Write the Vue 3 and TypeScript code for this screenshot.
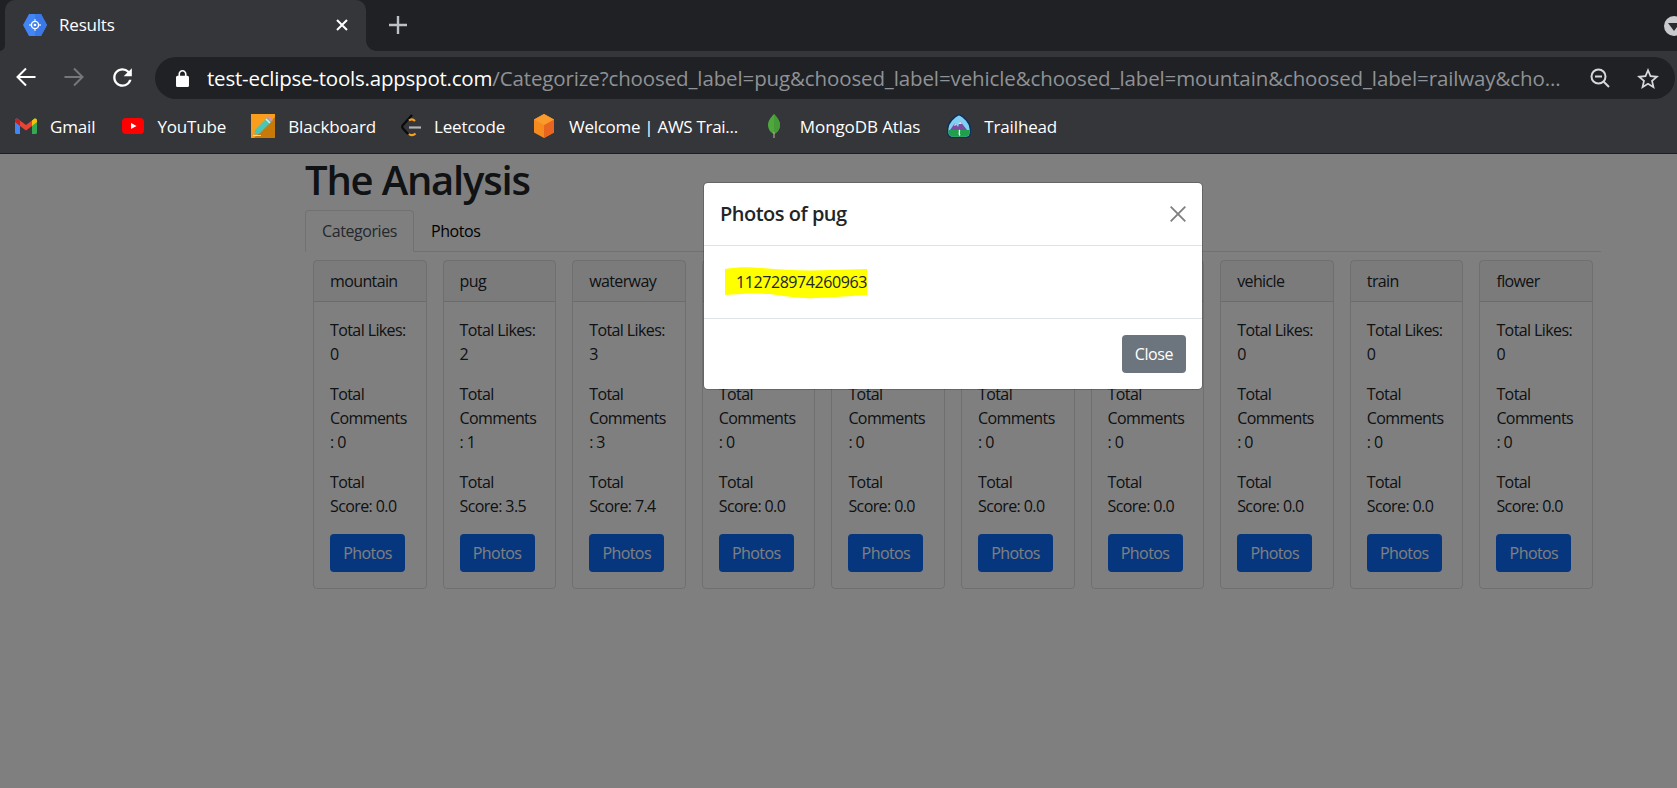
<template>
  <div class="window">
    <div class="tab-strip">
      <div class="tab">
        <svg class="favicon" viewBox="0 0 24 22" width="24" height="22">
          <polygon points="0,11 6,0 18,0 24,11 18,22 6,22" fill="#4285f4" />
          <polygon points="12,0 18,0 24,11 18,22 12,22" fill="#3b78e7" />
          <circle cx="12" cy="11" r="3.6" fill="none" stroke="#fff" stroke-width="1.4" />
          <circle cx="12" cy="11" r="1.3" fill="#fff" />
          <path d="M12 5v2M12 15v2M6 11h2M16 11h2" stroke="#cfe0fc" stroke-width="1.4" />
        </svg>
        <span class="tab-title">Results</span>
        <svg class="tab-close" viewBox="0 0 14 14" width="14" height="14">
          <path d="M2 2l10 10M12 2L2 12" stroke="#fff" stroke-width="2" />
        </svg>
      </div>
      <svg class="new-tab" viewBox="0 0 18 18" width="18" height="18">
        <path d="M9 0v18M0 9h18" stroke="#bdc1c6" stroke-width="2.4" />
      </svg>
      <div class="profile-dot"></div>
    </div>

    <div class="toolbar">
      <button class="nav-btn" type="button">
        <svg viewBox="0 0 20 20" width="20" height="20">
          <path d="M19.5 10H1.5M10 1.5L1.5 10l8.5 8.5" fill="none" stroke="#fff" stroke-width="2" />
        </svg>
      </button>
      <button class="nav-btn" type="button">
        <svg viewBox="0 0 20 20" width="20" height="20">
          <path d="M.5 10h18M10 1.5l8.5 8.5-8.5 8.5" fill="none" stroke="#74777b" stroke-width="2" />
        </svg>
      </button>
      <button class="nav-btn" type="button">
        <svg viewBox="3 3 18 18" width="21" height="21">
          <path
            fill="#fff"
            d="M17.65 6.35A7.958 7.958 0 0 0 12 4c-4.42 0-7.99 3.58-7.99 8s3.57 8 7.99 8c3.73 0 6.84-2.55 7.73-6h-2.08A5.99 5.99 0 0 1 12 18c-3.31 0-6-2.69-6-6s2.69-6 6-6c1.66 0 3.14.69 4.22 1.78L13 11h7V4l-2.35 2.35z"
          />
        </svg>
      </button>
      <div class="omnibox">
        <svg class="lock" viewBox="4 1 16 21" width="13" height="17">
          <path
            fill="#fff"
            d="M18 8h-1V6c0-2.76-2.24-5-5-5S7 3.24 7 6v2H6c-1.1 0-2 .9-2 2v10c0 1.1.9 2 2 2h12c1.1 0 2-.9 2-2V10c0-1.1-.9-2-2-2zM9 6c0-1.66 1.34-3 3-3s3 1.34 3 3v2H9V6z"
          />
        </svg>
        <span class="url"><span class="url-host">test-eclipse-tools.appspot.com</span>/Categorize?choosed_label=pug&amp;choosed_label=vehicle&amp;choosed_label=mountain&amp;choosed_label=railway&amp;cho...</span>
        <svg class="zoom-icon" viewBox="0 0 20 20" width="20" height="20">
          <circle cx="8.5" cy="8.5" r="7" fill="none" stroke="#d5d7da" stroke-width="2" />
          <path d="M5 8.5h7M13.5 13.5l5.5 5.5" stroke="#d5d7da" stroke-width="2" />
        </svg>
        <svg class="star-icon" viewBox="2 2 20 19" width="22" height="21">
          <path
            fill="#d5d7da"
            d="M22 9.24l-7.19-.62L12 2 9.19 8.63 2 9.24l5.46 4.73L5.82 21 12 17.27 18.18 21l-1.63-7.03L22 9.24zM12 15.4l-3.76 2.27 1-4.28-3.32-2.88 4.38-.38L12 6.1l1.71 4.04 4.38.38-3.32 2.88 1 4.28L12 15.4z"
          />
        </svg>
      </div>
    </div>

    <div class="bookmarks">
      <div class="bookmark gmail">
        <svg viewBox="0 0 22 16" width="22" height="16">
          <path d="M0 2.5C0 .8 1.8 0 3 1l2 1.600V16H1.500C.7 16 0 15.300 0 14.500z" fill="#4285f4" />
          <path d="M22 2.500C22 .8 20.200 0 19 1l-2 1.600V16h3.500c.8 0 1.500-.7 1.500-1.500z" fill="#34a853" />
          <path d="M5 2.600L11 7l6-4.400V8l-6 4.500L5 8z" fill="#ea4335" />
          <path d="M17 2.600L19 1c1.200-1 3-.2 3 1.500V4l-5 4z" fill="#fbbc04" />
          <path d="M0 2.500C0 .8 1.800 0 3 1l2 1.600V8L0 4z" fill="#c5221f" />
        </svg>
        <span>Gmail</span>
      </div>
      <div class="bookmark youtube">
        <svg viewBox="0 0 22 16" width="22" height="16">
          <rect width="22" height="16" rx="4" fill="#f00" />
          <path d="M9 5l5.500 3L9 11z" fill="#fff" />
        </svg>
        <span>YouTube</span>
      </div>
      <div class="bookmark blackboard">
        <svg viewBox="0 0 24 24" width="24" height="24">
          <rect width="24" height="24" fill="#f99d1c" />
          <path d="M24 3v21H3z" fill="#c77a0a" />
          <path d="M16.500 3.500l4 4L8 20l-4.500.5L4 16z" fill="#46c7b8" />
          <path d="M15 5l4 4" stroke="#e8e8e8" stroke-width="1.600" />
          <path d="M16.500 3.500l1.500-1.500 4 4-1.500 1.500z" fill="#d88bc4" />
          <path d="M2 21.500h8" stroke="#f7d9a0" stroke-width="1" />
        </svg>
        <span>Blackboard</span>
      </div>
      <div class="bookmark leetcode">
        <svg viewBox="0 0 20 24" width="20" height="24">
          <path d="M11 1L2 11c-1 1.200-1 2.500 0 3.600l5 5.400" fill="none" stroke="#0a0a0a" stroke-width="2.200" />
          <path d="M8 6.500c2-1.800 4-1.500 6 .5" fill="none" stroke="#f7a11b" stroke-width="2.200" />
          <path d="M8 20c2.500 2 4.500 1.500 6.500-.5" fill="none" stroke="#f7a11b" stroke-width="2.200" />
          <path d="M8 13.500h12" stroke="#b3b3b3" stroke-width="2.200" />
        </svg>
        <span>Leetcode</span>
      </div>
      <div class="bookmark aws">
        <svg viewBox="0 0 24 24" width="24" height="24">
          <path d="M12 0l10 5.500v13L12 24 2 18.500v-13z" fill="#f58a1f" />
          <path d="M12 11l10-5.500v13L12 24z" fill="#e8651f" />
          <path d="M12 0l10 5.500L12 11 2 5.500z" fill="#fa9a2d" />
        </svg>
        <span>Welcome | AWS Trai...</span>
      </div>
      <div class="bookmark mongo">
        <svg viewBox="0 0 12 24" width="12" height="24">
          <path d="M6 0c3 3.500 6 6.500 6 11 0 4.500-3 7.500-5.500 9h-1C3 18.500 0 15.500 0 11 0 6.500 3 3.500 6 0z" fill="#4fa83d" />
          <path d="M6 0c3 3.500 6 6.500 6 11 0 4.500-3 7.500-5.500 9H6z" fill="#469a38" />
          <path d="M6 18v6" stroke="#a9a594" stroke-width="1.200" />
        </svg>
        <span>MongoDB Atlas</span>
      </div>
      <div class="bookmark trailhead">
        <svg viewBox="0 0 24 24" width="24" height="24">
          <path d="M12 .7C17 2.500 23.300 9 23.300 15v3.500c0 2.800-2.200 5-5 5H5.700c-2.800 0-5-2.200-5-5V15C.7 9 7 2.500 12 .7z" fill="#7fd0f2" stroke="#0b2f5b" stroke-width="1.400" />
          <path d="M3 16l5-7 3 4 2-6 7 9z" fill="#7b4da0" />
          <path d="M8 9l1.500 2L7 12zM13 7l2 3h-3.500z" fill="#e6d7f0" />
          <path d="M1.500 16h21v2.500c0 2.300-1.900 4.200-4.200 4.200H5.700c-2.300 0-4.200-1.900-4.200-4.200z" fill="#1fa04a" />
          <path d="M12 16c2 2-1.500 2.500 1 5.500" fill="none" stroke="#fff" stroke-width="1.300" />
        </svg>
        <span>Trailhead</span>
      </div>
    </div>

    <main class="page">
      <div class="container">
        <h1>The Analysis</h1>
        <ul class="tabs">
          <li class="tab-link active">Categories</li>
          <li class="tab-link">Photos</li>
        </ul>
        <div class="card-row">
          <div v-for="item in categories" :key="item.name" class="card">
            <div class="card-header">{{ item.name }}</div>
            <div class="card-body">
              <p>Total Likes: {{ item.likes }}</p>
              <p>Total Comments : {{ item.comments }}</p>
              <p>Total Score: {{ item.score.toFixed(1) }}</p>
              <button class="btn btn-primary" type="button">Photos</button>
            </div>
          </div>
        </div>
      </div>

      <div class="backdrop"></div>

      <div class="modal">
        <div class="modal-header">
          <h5>Photos of pug</h5>
          <svg class="modal-close" viewBox="0 0 16 16" width="16" height="16">
            <path d="M.7.7l14.600 14.600M15.300.7L.7 15.300" stroke="#808080" stroke-width="1.900" />
          </svg>
        </div>
        <div class="modal-body">
          <span class="photo-id">
            <svg class="scribble" viewBox="0 0 142 32" width="142" height="32">
              <path
                d="M0 2 C12 0 24 0 36 1 C60 3 80 4 105 3 C118 3 130 2 142 2 V28 C125 29 112 30 90 31 C75 32 60 29 45 27 C30 26 15 27 0 28 Z"
                fill="#ffff00"
              />
            </svg>
            <span class="photo-text">112728974260963</span>
          </span>
        </div>
        <div class="modal-footer">
          <button class="btn btn-secondary" type="button">Close</button>
        </div>
      </div>
    </main>
  </div>
</template>

<script setup lang="ts">
interface Category {
  name: string;
  likes: number;
  comments: number;
  score: number;
}

const categories: Category[] = [
  { name: "mountain", likes: 0, comments: 0, score: 0 },
  { name: "pug", likes: 2, comments: 1, score: 3.5 },
  { name: "waterway", likes: 3, comments: 3, score: 7.4 },
  { name: "railway", likes: 0, comments: 0, score: 0 },
  { name: "bridge", likes: 0, comments: 0, score: 0 },
  { name: "road", likes: 0, comments: 0, score: 0 },
  { name: "river", likes: 0, comments: 0, score: 0 },
  { name: "vehicle", likes: 0, comments: 0, score: 0 },
  { name: "train", likes: 0, comments: 0, score: 0 },
  { name: "flower", likes: 0, comments: 0, score: 0 },
];
</script>

<style>
html,
body {
  margin: 0;
  background: #fff;
}
</style>

<style scoped>
.window {
  display: flex;
  flex-direction: column;
  width: 1677px;
  height: 788px;
  overflow: hidden;
  font-family: "Open Sans", "Noto Sans", "Liberation Sans", sans-serif;
  font-size: 16px;
  letter-spacing: -0.42px;
  color: #212529;
}

.tab-strip {
  display: flex;
  align-items: center;
  flex: 0 0 51px;
  padding-left: 5px;
  background: #202124;
}

.tab {
  position: relative;
  display: flex;
  align-items: center;
  align-self: stretch;
  width: 361px;
  padding: 0 17px 2px 18px;
  box-sizing: border-box;
  border-radius: 10px 10px 0 0;
  background: #35363a;
  color: #fff;
}

.tab::after {
  content: "";
  position: absolute;
  right: -10px;
  bottom: 0;
  width: 10px;
  height: 10px;
  background: radial-gradient(circle at 100% 0, transparent 9.5px, #35363a 10px);
}

.tab::before {
  content: "";
  position: absolute;
  left: -5px;
  bottom: 0;
  width: 5px;
  height: 5px;
  background: radial-gradient(circle at 0 0, transparent 4.5px, #35363a 5px);
}

.favicon {
  flex: none;
}

.tab-title {
  flex: 1;
  margin-left: 12px;
  font-size: 17px;
  letter-spacing: -0.2px;
}

.new-tab {
  margin-left: 23px;
  margin-bottom: 2px;
}

.profile-dot {
  position: relative;
  flex: none;
  width: 20px;
  height: 20px;
  margin-left: auto;
  margin-right: -7px;
  border-radius: 50%;
  background: #c8cacd;
}

.profile-dot::after {
  content: "";
  position: absolute;
  left: 4px;
  top: 7px;
  border-left: 6px solid transparent;
  border-right: 6px solid transparent;
  border-top: 8px solid #2a2b2e;
}

.toolbar {
  display: flex;
  flex: 0 0 48px;
  padding: 5px 2px 0;
  box-sizing: border-box;
  background: #35363a;
}

.nav-btn {
  display: flex;
  align-items: center;
  justify-content: center;
  width: 48px;
  height: 42px;
  padding: 0;
  border: 0;
  background: none;
}

.omnibox {
  display: flex;
  align-items: center;
  width: 1520px;
  height: 42px;
  margin-top: 1px;
  margin-left: 9px;
  padding-left: 21px;
  box-sizing: border-box;
  border-radius: 21px;
  background: #202124;
}

.url {
  width: 1360px;
  margin-left: 18px;
  font-size: 20.5px;
  letter-spacing: -0.12px;
  white-space: nowrap;
  overflow: hidden;
  color: #8f9296;
}

.url-host {
  color: #fff;
  letter-spacing: -0.22px;
}

.zoom-icon {
  margin-left: 23px;
}

.star-icon {
  margin-left: 27px;
}

.bookmarks {
  display: flex;
  align-items: center;
  flex: 0 0 54px;
  padding-left: 15px;
  box-sizing: border-box;
  background: #35363a;
  color: #fff;
  font-size: 17px;
  letter-spacing: -0.15px;
}

.bookmark {
  display: flex;
  align-items: center;
  gap: 13px;
  margin-right: 27px;
  white-space: nowrap;
}

.bookmark.youtube,
.bookmark.blackboard {
  margin-right: 25px;
}

.bookmark.aws {
  margin-right: 30px;
  letter-spacing: -0.3px;
}

.bookmark.mongo {
  gap: 20px;
  margin-right: 27px;
  letter-spacing: -0.1px;
}

.page {
  position: relative;
  flex: 1;
  border-top: 1px solid #1d1e20;
  background: #fff;
}

.container {
  width: 1296px;
  margin-left: 305px;
}

h1 {
  margin: 0 0 8px;
  padding-top: 3px;
  font-size: 40px;
  font-weight: 600;
  line-height: 45px;
  letter-spacing: -1.2px;
}

.tabs {
  display: flex;
  margin: 0;
  padding: 0;
  list-style: none;
  border-bottom: 1px solid #dee2e6;
}

.tab-link {
  margin-bottom: -1px;
  padding: 8px 16px;
  border: 1px solid transparent;
  border-radius: 4px 4px 0 0;
  line-height: 24px;
  color: #000;
}

.tab-link.active {
  border-color: #dee2e6 #dee2e6 #fff;
  background: #fff;
  color: #495057;
}

.card-row {
  display: grid;
  grid-template-columns: repeat(10, 1fr);
  padding-top: 8px;
}

.card {
  margin: 0 8px;
  border: 1px solid rgba(0, 0, 0, 0.125);
  border-radius: 4px;
}

.card-header {
  padding: 8px 16px;
  line-height: 24px;
  letter-spacing: -0.62px;
  border-bottom: 1px solid rgba(0, 0, 0, 0.125);
  background: rgba(0, 0, 0, 0.03);
}

.card-body {
  padding: 16px;
  line-height: 24px;
}

.card-body p {
  margin: 0 0 16px;
  letter-spacing: -0.6px;
}

.btn {
  height: 38px;
  padding: 6px 12px;
  box-sizing: border-box;
  border: 1px solid transparent;
  border-radius: 4px;
  font: inherit;
  letter-spacing: inherit;
  line-height: 24px;
  color: #fff;
}

.btn-primary {
  width: 75px;
  background: #0d6efd;
  letter-spacing: -0.58px;
}

.btn-secondary {
  background: #6c757d;
}

.backdrop {
  position: absolute;
  inset: 0;
  background: rgba(0, 0, 0, 0.5);
}

.modal {
  position: absolute;
  left: 703px;
  top: 28px;
  width: 498px;
  border: 1px solid rgba(0, 0, 0, 0.2);
  border-radius: 5px;
  background: #fff;
  background-clip: padding-box;
}

.modal-header {
  display: flex;
  align-items: center;
  justify-content: space-between;
  padding: 16px;
  border-bottom: 1px solid #dee2e6;
}

h5 {
  margin: 0;
  font-size: 20px;
  font-weight: 600;
  line-height: 30px;
  letter-spacing: -0.5px;
}

.modal-body {
  display: flex;
  padding: 16px;
}

.photo-id {
  position: relative;
  display: block;
  padding: 8px 16px;
  line-height: 24px;
}

.scribble {
  position: absolute;
  left: 5px;
  top: 5px;
}

.photo-text {
  position: relative;
}

.modal-footer {
  display: flex;
  justify-content: flex-end;
  padding: 16px;
  border-top: 1px solid #dee2e6;
}
</style>
